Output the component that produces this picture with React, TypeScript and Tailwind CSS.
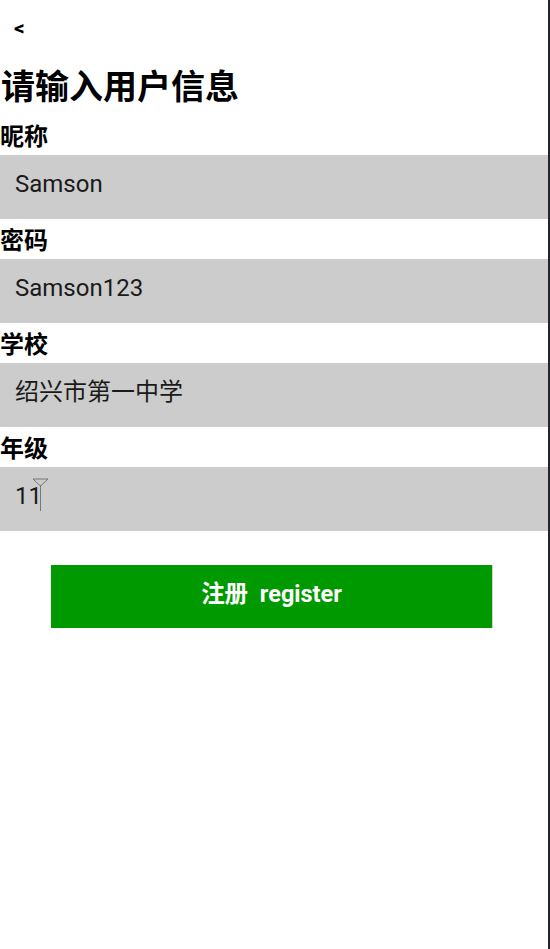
import React from "react";

// Form field data
interface Field {
  label: string;
  value: string;
  cursor?: boolean;
}

const fields: Field[] = [
  { label: "昵称", value: "Samson" },
  { label: "密码", value: "Samson123" },
  { label: "学校", value: "绍兴市第一中学" },
  { label: "年级", value: "11", cursor: true },
];

const cjk = "font-['Roboto','Noto_Sans_CJK_SC',sans-serif]";

const App: React.FC = () => {
  return (
    <div className={`flex min-h-[949px] w-[550px] bg-white ${cjk}`}>
      <div className="flex w-[548px] flex-col">
        {/* Header */}
        <div className="flex h-[56px] items-center pl-[14px]">
          <span className="text-[21px] font-bold leading-none text-black">&lt;</span>
        </div>

        {/* Title */}
        <h1 className="h-[59px] pl-[1px] pt-[11px] text-[34px] font-bold leading-[40px] text-black">
          请输入用户信息
        </h1>

        {/* Fields */}
        {fields.map((field) => (
          <div key={field.label} className="flex flex-col">
            <div className="flex h-[40px] items-center pt-[4px] text-[24px] font-bold leading-none text-black">
              {field.label}
            </div>
            <div className="flex h-[64px] items-center bg-[#cccccc] pb-[6px] pl-[15px] text-[24px] leading-none text-[#1a1a1a]">
              <span>{field.value}</span>
              {field.cursor && (
                <svg width="18" height="34" viewBox="0 0 18 34" className="-ml-[10px] -mt-[2px]">
                  <path d="M1 1 H16 L8.5 8 Z" fill="none" stroke="#777" strokeWidth="1" />
                  <line x1="8.5" y1="7" x2="8.5" y2="33" stroke="#777" strokeWidth="1" />
                </svg>
              )}
            </div>
          </div>
        ))}

        {/* Register button */}
        <div className="pt-[34px]">
          <button className="ml-[51px] flex h-[63px] w-[441px] items-center justify-center bg-[#009a00] pb-[4px] text-[23.5px] font-bold text-white shadow-[1px_0_0_#d0d0d0]">
            注册&nbsp;&nbsp;register
          </button>
        </div>
      </div>
      {/* Right edge */}
      <div className="w-[2px] self-stretch bg-[#1f2630]" />
    </div>
  );
};

export default App;
